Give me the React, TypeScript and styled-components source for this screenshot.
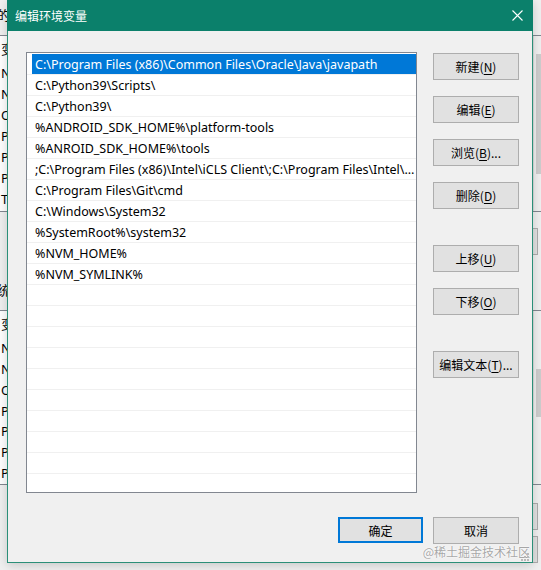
import React from 'react';
import styled, { createGlobalStyle } from 'styled-components';

const GlobalStyle = createGlobalStyle`
  html, body {
    margin: 0;
    padding: 0;
  }
  body {
    background: #f0f0f0;
    font-family: "Noto Sans", "Noto Sans CJK SC", sans-serif;
    font-size: 12px;
    color: #000;
  }
`;

const Screen = styled.div`
  position: relative;
  width: 541px;
  height: 570px;
  overflow: hidden;
  background: #f0f0f0;
`;

/* ---------- window behind the dialog ---------- */

const BackWindow = styled.div`
  display: flex;
  flex-direction: column;
  width: 555px;
  margin-left: -3px;
  padding-top: 6px;
`;

const BackLabel = styled.div<{ $top?: number }>`
  height: 29px;
  margin-top: ${({ $top }) => $top ?? 0}px;
  max-width: 40px;
  overflow: hidden;
  line-height: 18px;
  font-family: "Noto Sans CJK SC", sans-serif;
  font-size: 13px;
  white-space: nowrap;
`;

const BackPanel = styled.div<{ $height: number }>`
  display: flex;
  height: ${({ $height }) => $height}px;
  box-sizing: border-box;
  background: #fff;
  border: 1px solid #828790;
`;

const BackRows = styled.div`
  flex: 1;
  display: flex;
  flex-direction: column;
  overflow: hidden;
`;

const BackRow = styled.div<{ $header?: boolean }>`
  height: 21px;
  max-width: 40px;
  overflow: hidden;
  line-height: 21px;
  padding-left: 3px;
  white-space: nowrap;
  font-size: 13px;
  margin-top: ${({ $header }) => ($header ? '3px' : '0')};
  margin-bottom: ${({ $header }) => ($header ? '3px' : '0')};
`;

const BackScroll = styled.div`
  width: 17px;
  display: flex;
  flex-direction: column;
  background: #f0f0f0;
  border-left: 1px solid #dcdcdc;
`;

const BackThumb = styled.div<{ $top: number; $height: number }>`
  margin: ${({ $top }) => $top}px 0 0 2px;
  width: 10px;
  height: ${({ $height }) => $height}px;
  background: #cdcdcd;
`;

const BackButtons = styled.div<{ $pad: number }>`
  display: flex;
  justify-content: flex-end;
  gap: 9px;
  padding: ${({ $pad }) => $pad}px 14px 0 0;
  height: 27px;
`;

const BackButton = styled.div`
  width: 83px;
  height: 27px;
  box-sizing: border-box;
  background: #e1e1e1;
  border: 1px solid #adadad;
`;

/* ---------- dialog ---------- */

const Dialog = styled.div`
  position: absolute;
  left: 7px;
  top: 0;
  width: 526px;
  height: 563px;
  box-sizing: border-box;
  display: flex;
  flex-direction: column;
  background: #f0f0f0;
  border: 1px solid #2b8f78;
  border-top: none;
  box-shadow: 0 2px 10px rgba(0, 0, 0, 0.18);
`;

const TitleBar = styled.div`
  height: 31px;
  flex: none;
  display: flex;
  align-items: center;
  justify-content: space-between;
  padding-left: 8px;
  background: #0b806b;
  color: #fff;
  font-family: "Noto Sans CJK SC", sans-serif;
  font-size: 12px;
  margin: 0 -1px;
`;

const CloseButton = styled.div`
  width: 31px;
  height: 31px;
  display: flex;
  align-items: center;
  justify-content: center;
`;

const Body = styled.div`
  flex: 1;
  display: flex;
  flex-direction: column;
  padding: 21px 13px 19px 18px;
`;

const MainRow = styled.div`
  display: flex;
  gap: 16px;
  height: 441px;
`;

const PathList = styled.div`
  width: 391px;
  box-sizing: border-box;
  background: #fff;
  border: 1px solid #828790;
  padding-top: 1px;
  overflow: hidden;
`;

const PathRow = styled.div`
  height: 21px;
  box-sizing: border-box;
  border-bottom: 1px solid #f0f0f0;
  display: flex;
`;

const PathText = styled.div<{ $selected?: boolean }>`
  flex: 1;
  min-width: 0;
  margin-left: 5px;
  padding-left: 3px;
  height: 20px;
  line-height: 21px;
  font-size: 12.5px;
  white-space: nowrap;
  overflow: hidden;
  text-overflow: ellipsis;
  background: ${({ $selected }) => ($selected ? '#0078d7' : 'transparent')};
  color: ${({ $selected }) => ($selected ? '#fff' : '#000')};
`;

const SideColumn = styled.div`
  width: 86px;
  display: flex;
  flex-direction: column;
  gap: 36px;
  padding-top: 1px;
`;

const ButtonGroup = styled.div`
  display: flex;
  flex-direction: column;
  gap: 16px;
`;

const Button = styled.div<{ $default?: boolean; $width?: number }>`
  width: ${({ $width }) => $width ?? 86}px;
  height: ${({ $default }) => ($default ? 26 : 27)}px;
  box-sizing: border-box;
  display: flex;
  align-items: center;
  justify-content: center;
  background: #e1e1e1;
  border: ${({ $default }) => ($default ? '2px solid #0078d7' : '1px solid #adadad')};
  font-family: "Noto Sans CJK SC", sans-serif;
  font-size: 12px;
  white-space: nowrap;
  color: #000;

  u {
    text-underline-offset: 2px;
  }
`;

const Footer = styled.div`
  display: flex;
  justify-content: flex-end;
  gap: 10px;
  margin-top: 24px;
`;

const Watermark = styled.div`
  position: absolute;
  right: 11px;
  bottom: 10px;
  font-family: "Noto Sans CJK SC", sans-serif;
  font-size: 12px;
  color: rgba(150, 150, 150, 0.85);
  text-shadow: 0 0 2px #fff, 0 0 1px #fff;
  white-space: nowrap;
`;

const Grip = styled.svg`
  position: absolute;
  right: 12px;
  bottom: 9px;
`;

const PATHS = [
  'C:\\Program Files (x86)\\Common Files\\Oracle\\Java\\javapath',
  'C:\\Python39\\Scripts\\',
  'C:\\Python39\\',
  '%ANDROID_SDK_HOME%\\platform-tools',
  '%ANROID_SDK_HOME%\\tools',
  ';C:\\Program Files (x86)\\Intel\\iCLS Client\\;C:\\Program Files\\Intel\\iCLS Client\\;C:\\Windows\\system32',
  'C:\\Program Files\\Git\\cmd',
  'C:\\Windows\\System32',
  '%SystemRoot%\\system32',
  '%NVM_HOME%',
  '%NVM_SYMLINK%',
];

const TOTAL_ROWS = 21;

const USER_VARS = ['NUMBER_OF_PROCESSORS', 'NVM_HOME', 'OneDrive', 'Path', 'PyCharm', 'Python', 'TEMP'];
const SYS_VARS = ['NUMBER_OF_PROCESSORS', 'NVM_HOME', 'OS', 'Path', 'PATHEXT', 'PROCESSOR_ARCHITECTURE', 'PROCESSOR_IDENTIFIER'];

const Label = ({ text, hotkey, suffix = '' }: { text: string; hotkey: string; suffix?: string }) => (
  <span>
    {text}(<u>{hotkey}</u>){suffix}
  </span>
);

const BackSection = ({
  title,
  vars,
  height,
  thumbTop,
  thumbHeight,
  labelTop,
}: {
  title: string;
  vars: string[];
  height: number;
  thumbTop: number;
  thumbHeight: number;
  labelTop?: number;
}) => (
  <>
    <BackLabel $top={labelTop}>{title}</BackLabel>
    <BackPanel $height={height}>
      <BackRows>
        <BackRow $header>变量</BackRow>
        {vars.map((v) => (
          <BackRow key={v}>{v}</BackRow>
        ))}
      </BackRows>
      <BackScroll>
        <BackThumb $top={thumbTop} $height={thumbHeight} />
      </BackScroll>
    </BackPanel>
  </>
);

const App = () => {
  const rows = Array.from({ length: TOTAL_ROWS }, (_, i) => PATHS[i] ?? '');

  return (
    <>
      <GlobalStyle />
      <Screen>
        <BackWindow>
          <BackSection title="的用户变量(U)" vars={USER_VARS} height={177} thumbTop={18} thumbHeight={120} />
          <BackButtons $pad={16}>
            <BackButton />
            <BackButton />
            <BackButton />
          </BackButtons>
          <BackSection
            title="统变量(S)"
            vars={SYS_VARS}
            height={175}
            thumbTop={58}
            thumbHeight={48}
            labelTop={26}
          />
          <BackButtons $pad={18}>
            <BackButton />
            <BackButton />
            <BackButton />
          </BackButtons>
          <BackButtons $pad={6}>
            <BackButton />
            <BackButton />
          </BackButtons>
        </BackWindow>

        <Dialog>
          <TitleBar>
            <span>编辑环境变量</span>
            <CloseButton>
              <svg width="11" height="11" viewBox="0 0 11 11">
                <path d="M0.5 0.5 L10.5 10.5 M10.5 0.5 L0.5 10.5" stroke="#fff" strokeWidth="1.1" />
              </svg>
            </CloseButton>
          </TitleBar>
          <Body>
            <MainRow>
              <PathList>
                {rows.map((p, i) => (
                  <PathRow key={i}>
                    <PathText $selected={i === 0}>{p}</PathText>
                  </PathRow>
                ))}
              </PathList>
              <SideColumn>
                <ButtonGroup>
                  <Button><Label text="新建" hotkey="N" /></Button>
                  <Button><Label text="编辑" hotkey="E" /></Button>
                  <Button><Label text="浏览" hotkey="B" suffix="..." /></Button>
                  <Button><Label text="删除" hotkey="D" /></Button>
                </ButtonGroup>
                <ButtonGroup>
                  <Button><Label text="上移" hotkey="U" /></Button>
                  <Button><Label text="下移" hotkey="O" /></Button>
                </ButtonGroup>
                <ButtonGroup>
                  <Button><Label text="编辑文本" hotkey="T" suffix="..." /></Button>
                </ButtonGroup>
              </SideColumn>
            </MainRow>
            <Footer>
              <Button $default $width={85}>确定</Button>
              <Button $width={86}>取消</Button>
            </Footer>
          </Body>
        </Dialog>

        <Watermark>@稀土掘金技术社区</Watermark>
        <Grip width="8" height="8" viewBox="0 0 8 8">
          <rect x="6" y="0" width="2" height="2" fill="#b9b9b9" />
          <rect x="3" y="3" width="2" height="2" fill="#b9b9b9" />
          <rect x="6" y="3" width="2" height="2" fill="#b9b9b9" />
          <rect x="0" y="6" width="2" height="2" fill="#b9b9b9" />
          <rect x="3" y="6" width="2" height="2" fill="#b9b9b9" />
          <rect x="6" y="6" width="2" height="2" fill="#b9b9b9" />
        </Grip>
      </Screen>
    </>
  );
};

export default App;
